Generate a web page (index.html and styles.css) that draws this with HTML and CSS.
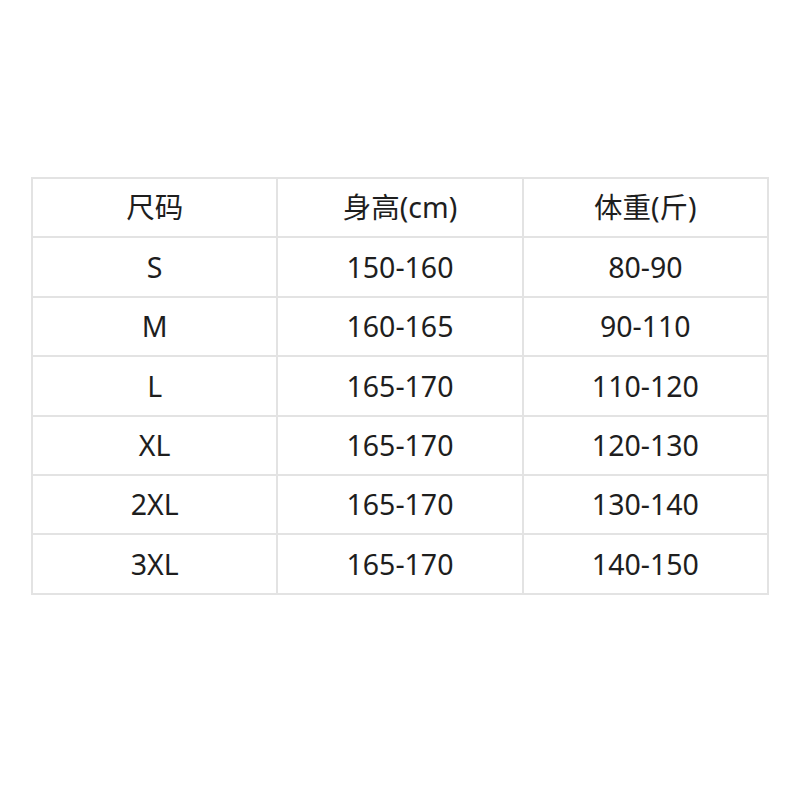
FILE: index.html
```html
<!DOCTYPE html>
<html lang="zh">
<head>
<meta charset="utf-8">
<link rel="stylesheet" href="styles.css">
</head>
<body>
<div class="page">
  <table class="size">
    <tr><td>尺码</td><td>身高(cm)</td><td>体重(斤)</td></tr>
    <tr><td>S</td><td>150-160</td><td>80-90</td></tr>
    <tr><td>M</td><td>160-165</td><td>90-110</td></tr>
    <tr><td>L</td><td>165-170</td><td>110-120</td></tr>
    <tr><td>XL</td><td>165-170</td><td>120-130</td></tr>
    <tr><td>2XL</td><td>165-170</td><td>130-140</td></tr>
    <tr><td>3XL</td><td>165-170</td><td>140-150</td></tr>
  </table>
</div>
</body>
</html>
```
FILE: styles.css
```css
html, body { margin: 0; padding: 0; background: #fff; }
.page { padding: 177px 0 0 31px; }
.size {
  border-collapse: collapse;
  width: 738px;
  table-layout: fixed;
  font-family: "Noto Sans", "Noto Sans CJK SC", sans-serif;
  font-size: 28.5px;
  color: #1e1e1e;
}
.size td {
  border: 2px solid #e3e3e3;
  height: 57.4px;
  padding: 0;
  text-align: center;
  vertical-align: middle;
  line-height: 1;
}
```
